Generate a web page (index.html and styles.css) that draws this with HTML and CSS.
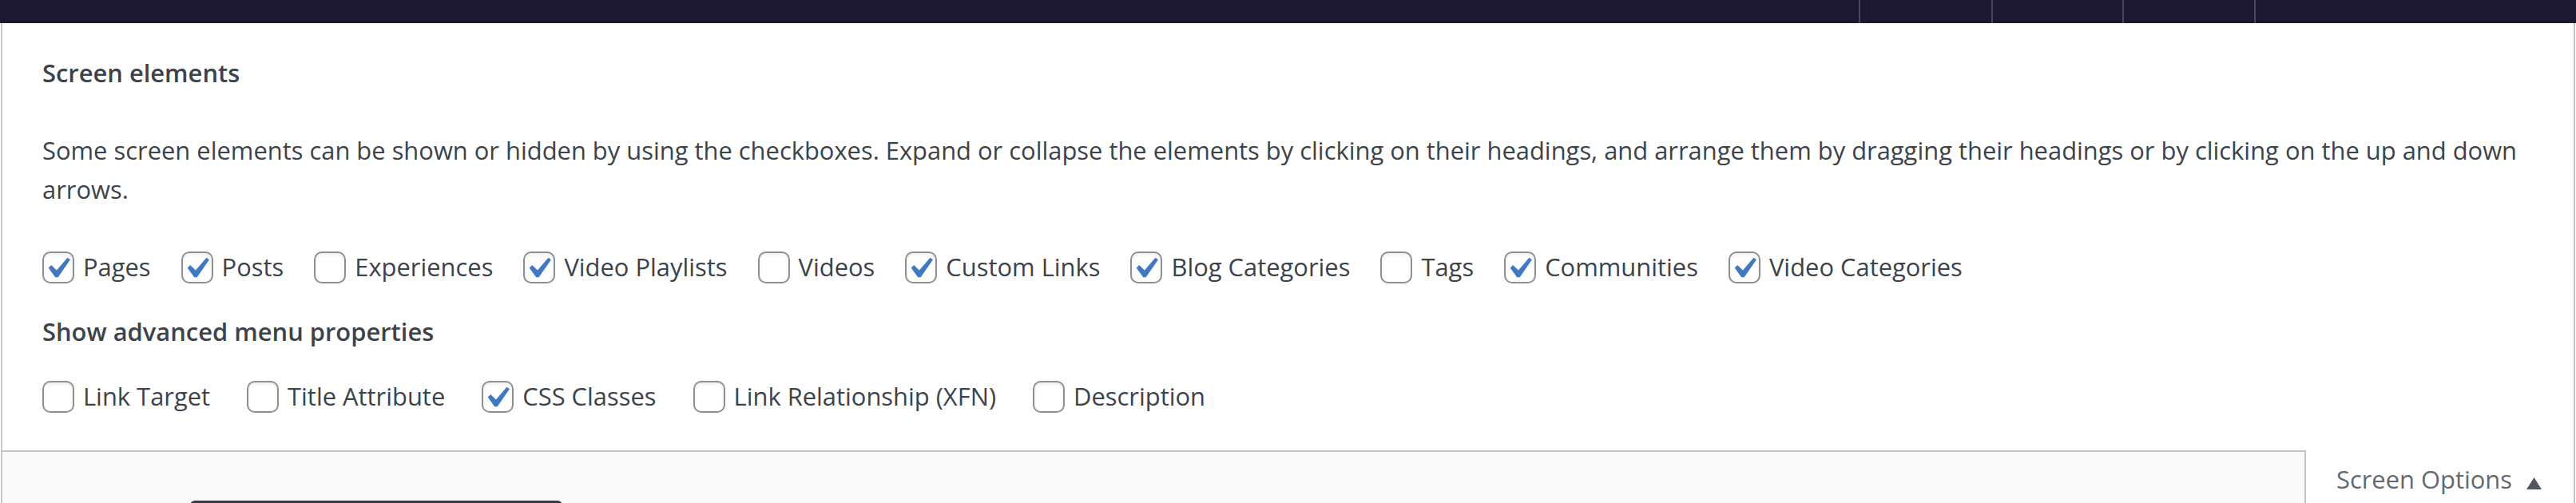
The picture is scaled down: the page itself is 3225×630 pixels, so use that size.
FILE: index.html
```html
<!DOCTYPE html>
<html lang="en">
<head>
<meta charset="utf-8">
<title>Screen Options</title>
<link rel="stylesheet" href="styles.css">
</head>
<body>
<div class="adminbar">
  <div class="adminbar-fill"></div>
  <div class="adminbar-item w166"></div>
  <div class="adminbar-item w164"></div>
  <div class="adminbar-item w165"></div>
  <div class="adminbar-item w403"></div>
</div>

<div class="screen-meta">
  <div class="prefs-title">Screen elements</div>
  <p class="prefs-desc">Some screen elements can be shown or hidden by using the checkboxes. Expand or collapse the elements by clicking on their headings, and arrange them by dragging their headings or by clicking on the up and down arrows.</p>

  <div class="prefs-row row-main">
    <label class="opt"><span class="cb"><svg viewBox="3.62 2.67 13.71 13.71"><path d="M14.83 4.89l1.34.94-5.81 8.38H9.02L5.78 9.67l1.34-1.25 2.57 2.4z"/></svg></span>Pages</label>
    <label class="opt"><span class="cb"><svg viewBox="3.62 2.67 13.71 13.71"><path d="M14.83 4.89l1.34.94-5.81 8.38H9.02L5.78 9.67l1.34-1.25 2.57 2.4z"/></svg></span>Posts</label>
    <label class="opt"><span class="cb"></span>Experiences</label>
    <label class="opt"><span class="cb"><svg viewBox="3.62 2.67 13.71 13.71"><path d="M14.83 4.89l1.34.94-5.81 8.38H9.02L5.78 9.67l1.34-1.25 2.57 2.4z"/></svg></span>Video Playlists</label>
    <label class="opt"><span class="cb"></span>Videos</label>
    <label class="opt"><span class="cb"><svg viewBox="3.62 2.67 13.71 13.71"><path d="M14.83 4.89l1.34.94-5.81 8.38H9.02L5.78 9.67l1.34-1.25 2.57 2.4z"/></svg></span>Custom Links</label>
    <label class="opt"><span class="cb"><svg viewBox="3.62 2.67 13.71 13.71"><path d="M14.83 4.89l1.34.94-5.81 8.38H9.02L5.78 9.67l1.34-1.25 2.57 2.4z"/></svg></span>Blog Categories</label>
    <label class="opt"><span class="cb"></span>Tags</label>
    <label class="opt"><span class="cb"><svg viewBox="3.62 2.67 13.71 13.71"><path d="M14.83 4.89l1.34.94-5.81 8.38H9.02L5.78 9.67l1.34-1.25 2.57 2.4z"/></svg></span>Communities</label>
    <label class="opt"><span class="cb"><svg viewBox="3.62 2.67 13.71 13.71"><path d="M14.83 4.89l1.34.94-5.81 8.38H9.02L5.78 9.67l1.34-1.25 2.57 2.4z"/></svg></span>Video Categories</label>
  </div>

  <div class="prefs-title adv-title">Show advanced menu properties</div>

  <div class="prefs-row row-adv">
    <label class="opt"><span class="cb"></span>Link Target</label>
    <label class="opt"><span class="cb"></span>Title Attribute</label>
    <label class="opt"><span class="cb"><svg viewBox="3.62 2.67 13.71 13.71"><path d="M14.83 4.89l1.34.94-5.81 8.38H9.02L5.78 9.67l1.34-1.25 2.57 2.4z"/></svg></span>CSS Classes</label>
    <label class="opt"><span class="cb"></span>Link Relationship (XFN)</label>
    <label class="opt"><span class="cb"></span>Description</label>
  </div>
</div>

<div class="meta-links">
  <div class="content-area">
    <div class="dark-tab"></div>
  </div>
  <div class="options-tab">
    <span class="options-label">Screen Options</span>
    <svg class="options-arrow" viewBox="0 0 19 15"><polygon points="9.5,0 19,15 0,15"/></svg>
  </div>
</div>
</body>
</html>
```

FILE: styles.css
```css
html, body {
  margin: 0;
  padding: 0;
}

body {
  background: #ffffff;
  font-family: "Segoe UI", "Open Sans", "Noto Sans", sans-serif;
  font-size: 30.9px;
  line-height: 49px;
  color: #3c434a;
  overflow: hidden;
  height: 630px;
}

/* top admin bar */
.adminbar {
  display: flex;
  height: 29px;
  background: #1b1830;
}

.adminbar-fill {
  flex: 1;
}

.adminbar-item {
  border-left: 2px solid #4a4661;
  box-sizing: border-box;
}

.w166 { width: 166px; }
.w164 { width: 164px; }
.w165 { width: 165px; }
.w403 { width: 403px; }

/* screen options panel */
.screen-meta {
  margin-left: 1px;
  width: 3223px;
  box-sizing: border-box;
  border-left: 2px solid #c8c8ce;
  border-right: 2px solid #c3c4c7;
  padding: 38px 50px 43px 50px;
  background: #ffffff;
}

.prefs-title {
  font-weight: 600;
  height: 49px;
}

.adv-title {
  margin-top: 32px;
}

.prefs-desc {
  margin: 48px 0 0 0;
}

.prefs-row {
  display: flex;
  flex-wrap: wrap;
  height: 49px;
}

.row-main {
  margin-top: 48px;
  column-gap: 38px;
}

.row-adv {
  margin-top: 32px;
  column-gap: 46px;
}

.opt {
  display: flex;
  align-items: center;
  height: 49px;
  white-space: nowrap;
}

.cb {
  width: 40px;
  height: 40px;
  box-sizing: border-box;
  border: 2px solid #8c8f94;
  border-radius: 10px;
  background: #ffffff;
  box-shadow: inset 0 2px 4px rgba(0, 0, 0, 0.08);
  margin-right: 11px;
  flex: none;
  display: flex;
}

.cb svg {
  width: 36px;
  height: 36px;
  overflow: visible;
  fill: #4079c2;
}

/* screen options link row */
.meta-links {
  display: flex;
  margin-left: 1px;
  width: 3223px;
  height: 70px;
}

.content-area {
  flex: 1;
  border-top: 2px solid #c3c4c7;
  border-left: 2px solid #c8c8ce;
  background: #f9f9f9;
  padding: 61px 0 0 235px;
}

.dark-tab {
  width: 466px;
  height: 12px;
  background: #3a374e;
  border-radius: 6px 6px 0 0;
}

.options-tab {
  width: 339px;
  box-sizing: border-box;
  border-left: 2px solid #c3c4c7;
  border-right: 2px solid #c3c4c7;
  background: #ffffff;
  display: flex;
  align-items: flex-start;
  padding: 12px 0 0 38px;
  column-gap: 18px;
}

.options-label {
  color: #646970;
  white-space: nowrap;
}

.options-arrow {
  width: 19px;
  height: 15px;
  margin-top: 22px;
  fill: #50575e;
}
```
